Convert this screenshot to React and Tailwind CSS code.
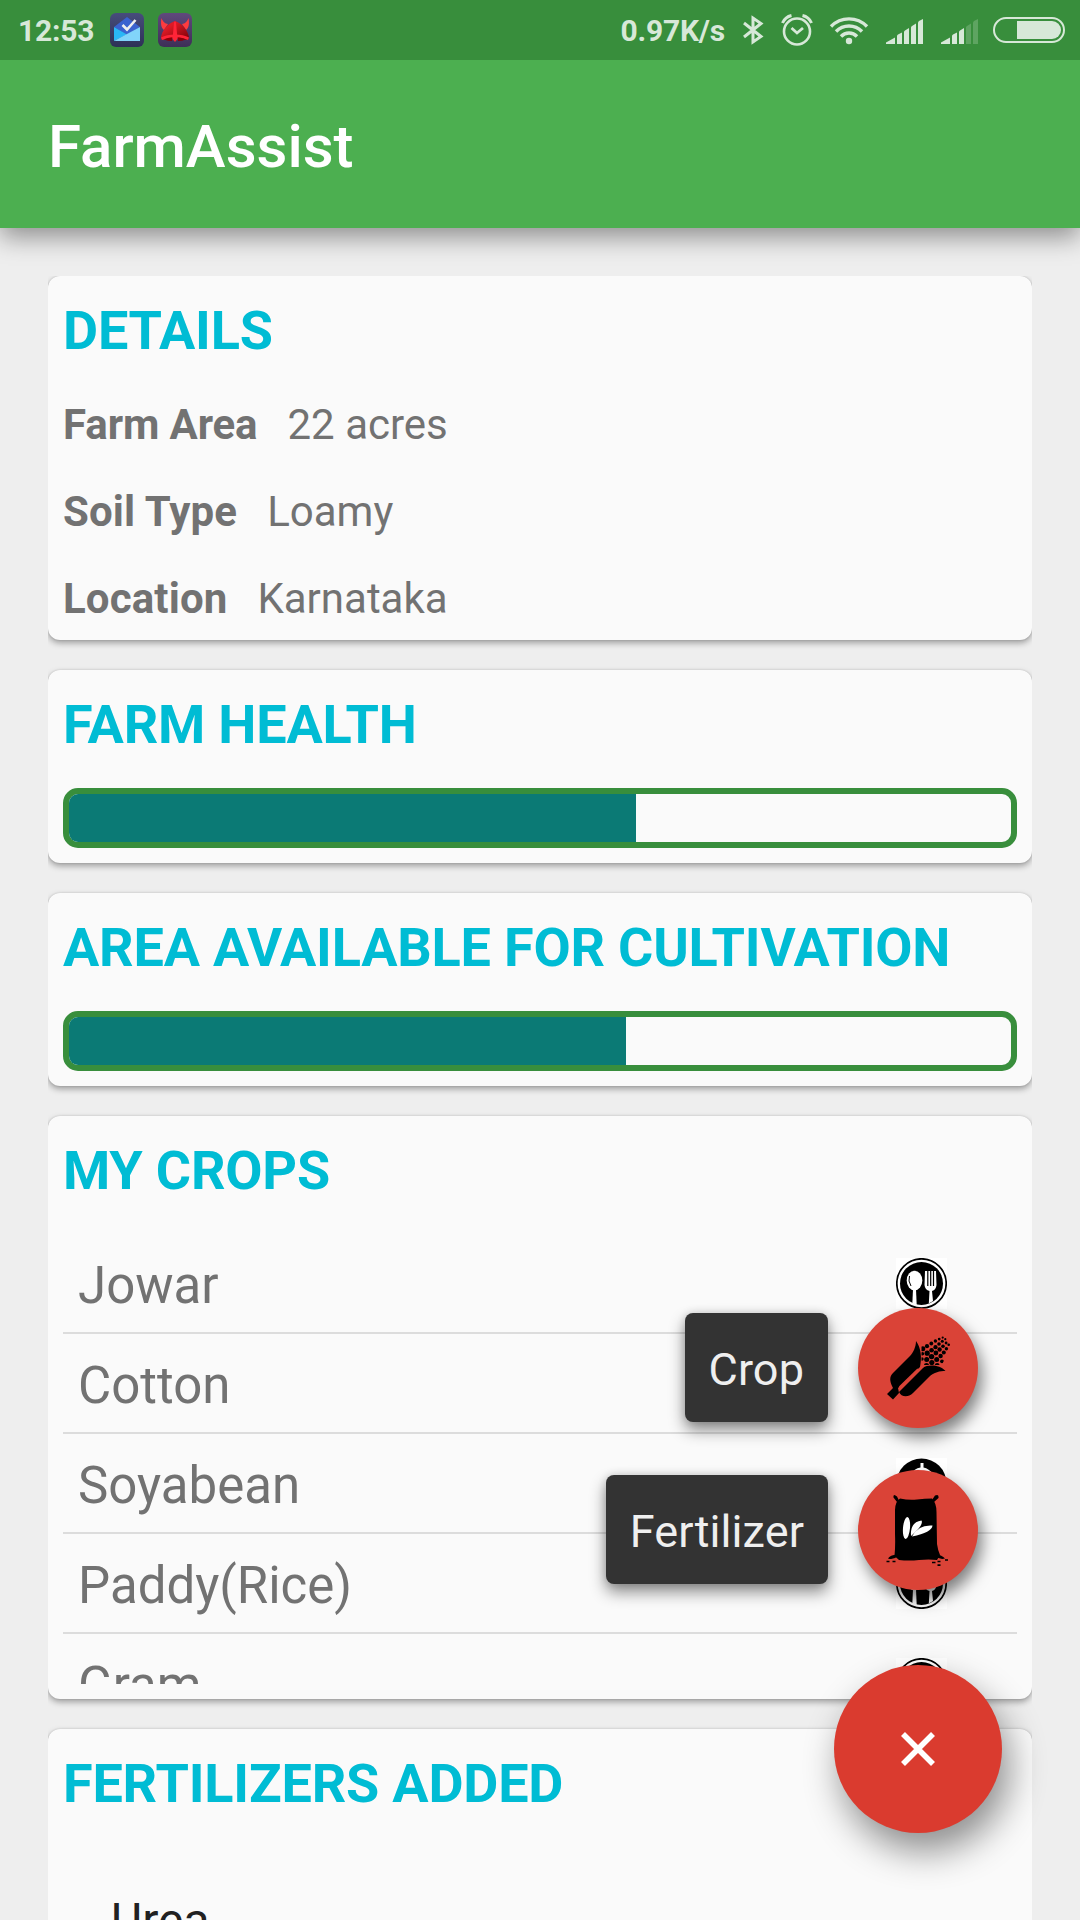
const crops = [
  { name: "Jowar", icon: "cutlery" },
  { name: "Cotton", icon: null },
  { name: "Soyabean", icon: "cloche" },
  { name: "Paddy(Rice)", icon: "cutlery" },
  { name: "Gram", icon: "cutlery" },
];

const details = [
  ["Farm Area", "22 acres", "tracking-[-0.1px]"],
  ["Soil Type", "Loamy", "tracking-[0.13px]"],
  ["Location", "Karnataka", "tracking-[0.13px]"],
];

// Corn kernels as [x, y, radius], row by row from the husk to the tip.
const kernels = [
  [40.8, 16.7, 2.5], [45, 14.2, 2.1], [49.3, 11.5, 1.9], [53.4, 9, 1.7], [57.2, 7.1, 1.4], [60.7, 5.6, 1.1],
  [40.4, 21.8, 1.8], [45.2, 21.2, 2.6], [49.6, 18.2, 2.3], [53.5, 15.2, 2.1], [57, 12, 1.8], [60.3, 9.3, 1.5], [63.3, 7.2, 1.1],
  [40, 27, 1.7], [44.7, 27.6, 2.5], [49.6, 24.6, 2.7], [53.9, 21, 2.4], [57.6, 17.5, 2.2], [61, 14.2, 1.8], [64.1, 11, 1.4],
  [44.5, 33.5, 2.6], [49.8, 30.6, 2.6], [54.7, 27.5, 2.5], [58.6, 24, 2.2], [61.8, 20.4, 2], [64.4, 16.8, 1.7], [66.7, 12.8, 1.3],
  [55.2, 33.4, 2.4], [60, 29.3, 1.9],
];

function InboxIcon() {
  return (
    <svg className="h-[34px] w-[34px]" viewBox="0 0 34 34">
      <defs>
        <linearGradient id="inbox-bg" x1="0" y1="0" x2="0" y2="1">
          <stop offset="0" stopColor="#474c7c" />
          <stop offset="1" stopColor="#2d3156" />
        </linearGradient>
      </defs>
      <rect width="34" height="34" rx="6" fill="url(#inbox-bg)" />
      <path d="M4 14 L17 4 L30 14 L17 22 Z" fill="#3a62cf" />
      <path d="M4 14 L17 21.500 L4 28 Z" fill="#29b6f6" />
      <path d="M30 14 V28 H4 Z" fill="#81d4fa" />
      <path d="M12.500 12 L17 16.500 L25.500 7" fill="none" stroke="#eee" strokeWidth="2.600" />
    </svg>
  );
}

function HelmetIcon() {
  return (
    <svg className="h-[34px] w-[34px]" viewBox="0 0 34 34">
      <defs>
        <linearGradient id="helmet-bg" x1="0" y1="0" x2="0" y2="1">
          <stop offset="0" stopColor="#60497d" />
          <stop offset="1" stopColor="#3d2f57" />
        </linearGradient>
        <linearGradient id="helmet-dome" x1="0" y1="0" x2="1" y2="1">
          <stop offset="0.300" stopColor="#dd1a25" />
          <stop offset="1" stopColor="#7a0008" />
        </linearGradient>
      </defs>
      <rect width="34" height="34" rx="6" fill="url(#helmet-bg)" />
      <path d="M3.500 5 C5 9 7 10.500 10 11 L6 17 C3 15 2.500 10 3.500 5 Z" fill="#ff3b3f" />
      <path d="M30.500 5 C29 9 27 10.500 24 11 L28 17 C31 15 31.500 10 30.500 5 Z" fill="#ff3b3f" />
      <path d="M3 24 C4.500 17 9 11 17 8 C25 11 29.500 17 31 24 L30 27 L20 25.500 H14 L4 27 Z" fill="url(#helmet-dome)" />
      <path d="M3 24.500 C10 20.500 24 20.500 31 24.500 L30 27 Q24 24 20 24.500 H14 Q10 24 4 27 Z" fill="#ff2437" />
      <path d="M6 26.500 Q10 24.500 14 24.500 V28 Q10 28 6 26.500 Z M28 26.500 Q24 24.500 20 24.500 V28 Q24 28 28 26.500 Z" fill="#8a000a" />
      <path d="M16 9.500 L17 8 L18 9.500 L19.500 26 L17 29 L14.500 26 Z" fill="#ff2437" />
    </svg>
  );
}

function BluetoothIcon() {
  return (
    <svg className="ml-[17px] h-[30px] w-[22px]" viewBox="0 0 22 30">
      <path
        d="M2 8 L19 21.500 L11 27 V3 L19 8.500 L2 22"
        fill="none"
        stroke="#d7e8d8"
        strokeWidth="3"
      />
    </svg>
  );
}

function AlarmIcon() {
  return (
    <svg className="ml-[17px] h-8 w-8" viewBox="0 0 32 32" fill="none" stroke="#d7e8d8">
      <circle cx="16" cy="17.500" r="13" strokeWidth="2.600" />
      <path d="M10.500 14 L16 19 L22 14" strokeWidth="2.800" />
      <path d="M1.500 9 C3 5.500 6 2.500 10.500 1.500 M30.500 9 C29 5.500 26 2.500 21.500 1.500" strokeWidth="3" />
    </svg>
  );
}

function WifiIcon() {
  return (
    <svg className="ml-[15px] h-[30px] w-[42px]" viewBox="0 0 42 30" fill="none" stroke="#d7e8d8" strokeWidth="3.400">
      <path d="M3 11.500 A25 25 0 0 1 39 11.500" />
      <path d="M8 16.500 A18 18 0 0 1 34 16.500" />
      <path d="M13 21.500 A11 11 0 0 1 29 21.500" />
      <circle cx="21" cy="26" r="3.200" fill="#d7e8d8" stroke="none" />
    </svg>
  );
}

function SignalIcon({ bars, className }) {
  const shapes = [
    "M0 25 V23.500 L9 18.500 V25 Z",
    "M11 25 V17 Q11 16 12 15.500 L16 13.500 V25 Z",
    "M18 25 V13 Q18 12 19 11.500 L23 9 V25 Z",
    "M25 25 V8.500 Q25 7.500 26 7 L30 4.500 V25 Z",
    "M32 25 V4 Q32 3 33 2 L37 0 V25 Z",
  ];
  return (
    <svg className={`mt-0.5 h-[25px] w-[37px] ${className}`} viewBox="0 0 37 25">
      {shapes.map((d, i) => (
        <path key={d} d={d} fill={i < bars ? "#d7e8d8" : "#5ea461"} />
      ))}
    </svg>
  );
}

function BatteryIcon() {
  return (
    <svg className="ml-[15px] h-[26px] w-[72px]" viewBox="0 0 72 26">
      <rect x="1" y="1" width="70" height="24" rx="12" fill="none" stroke="#d7e8d8" strokeWidth="2" />
      <path d="M24 4 H59 A9 9 0 0 1 59 22 H24 Z" fill="#d7e8d8" />
    </svg>
  );
}

function CutleryIcon() {
  return (
    <svg className="h-[51px] w-[51px] bg-white" viewBox="0 0 51 51">
      <circle cx="25.500" cy="25.500" r="24.700" fill="#fff" stroke="#000" strokeWidth="1.700" />
      <circle cx="25.500" cy="25.500" r="21.500" fill="#000" />
      <ellipse cx="18.500" cy="22.500" rx="7.800" ry="9.800" fill="#fff" />
      <path d="M13.500 18 Q11.800 23 15 28" fill="none" stroke="#000" strokeWidth="1" />
      <path d="M17 31 H20 L20.700 47 L16.300 46 Z" fill="#fff" />
      <path d="M29 13 H40 L40.500 27 Q40 32 36 33 L37 43 L32.800 45.500 L33.500 33 Q29 32 28.500 27 Z" fill="#fff" />
      <path d="M31.800 13 V28 M34.700 13 V28 M37.500 13 V28" stroke="#000" strokeWidth="1.200" />
    </svg>
  );
}

function ClocheIcon() {
  return (
    <svg className="h-[51px] w-[51px] bg-white" viewBox="0 0 51 51">
      <circle cx="25.500" cy="25.500" r="25" fill="#000" />
      <path d="M24.500 5 H27.500 V9.500 Q33 10.500 37 16 H15 Q18 10.500 24.500 9.500 Z" fill="#fff" />
    </svg>
  );
}

function CornIcon() {
  return (
    <svg className="h-[72px] w-[72px]" viewBox="0 0 72 72">
      <defs>
        <clipPath id="cob">
          <path d="M39.500 12 L62 3 L70 10 L60 33 H39.500 Z" />
        </clipPath>
      </defs>
      <g clipPath="url(#cob)">
        {kernels.map(([x, y, r]) => (
          <circle key={`${x}-${y}`} cx={x} cy={y} r={r} />
        ))}
      </g>
      <path d="M34 9 C34 15 31 21 28 24 L11 41 C7 45 8 49 10 54 L11 56 L5 62 L11 67.500 L17 61 L16 56 L38 35 C40 25 39 16 34 9 Z" />
      <path d="M63.500 39 C58 33 46 32 41 36 L17 60 C19 65 26 66 31 61 L47 45 C52 40 58 39 63.500 39 Z" />
      <path d="M17.500 55 L36 37" stroke="#da4337" strokeWidth="1.700" />
    </svg>
  );
}

function SackIcon() {
  return (
    <svg className="ml-0.5 h-[72px] w-[72px]" viewBox="0 0 72 72">
      <path d="M17 4.500 Q26 6.500 34 5.500 T49 4.500 Q53.500 9 53.500 18 L54 50 Q55 57 57 61 L54 66 Q46 65 36 66 T16 66 L11.500 62 Q12.500 52 12 40 L12 16 Q12 8 17 4.500 Z" />
      <path d="M16 6.500 L14 2.500 Q10 -1 10.500 3.500 L14 8 Z M49 6 L52 1.500 Q56 -0.500 55.500 4 L51 8 Z" />
      <path d="M14 60.500 Q7 61 5 64.500 Q10 66.500 15 62 Z M53 60 Q59 61 62 64.500 Q57 66 52 62 Z" />
      <ellipse cx="23.500" cy="34" rx="3.500" ry="11" fill="#fff" transform="rotate(5 23.500 34)" />
      <path d="M28 42 Q27 28 38.500 26.500 Q41 31 28 42 Z" fill="#fff" />
      <path d="M29 42.500 Q35 30.500 49.500 31.500 Q49 38.500 29 42.500 Z" fill="#fff" />
      <path d="M3.500 67.500 h3 M9.500 67.500 h3 M49 68.500 h3.500 M54.500 67.500 h3 M62 66 h3 M54.500 71.200 h3" stroke="#000" strokeWidth="1.700" />
    </svg>
  );
}

function Card({ title, children, className = "" }) {
  return (
    <section
      className={`shrink-0 rounded-xl bg-[#fafafa] px-[15px] pb-[15px] pt-[23px] shadow-[0_3px_6px_rgba(0,0,0,0.34),0_0_2px_rgba(0,0,0,0.16)] ${className}`}
    >
      <h2 className="h-16 whitespace-nowrap text-[54px] font-bold leading-[64px] tracking-[-0.2px] text-[#00bcd4]">
        {title}
      </h2>
      {children}
    </section>
  );
}

function Meter({ value }) {
  return (
    <div className="mt-[31px] h-[60px] overflow-hidden rounded-[15px] border-[6px] border-[#388e3c]">
      <div className="h-full bg-[#0b7a75]" style={{ width: value }} />
    </div>
  );
}

function Action({ label, children }) {
  return (
    <div className="flex items-start justify-end gap-[30px] pr-6">
      <span className="mt-[5px] flex h-[109px] items-center rounded-lg bg-[#333] px-6 pt-[3px] text-[45px] leading-[53px] tracking-[0.1px] text-[#efefef] shadow-[0_8px_16px_rgba(0,0,0,0.45),0_0_8px_rgba(0,0,0,0.14)]">
        {label}
      </span>
      <span className="flex h-[120px] w-[120px] items-center justify-center rounded-full bg-[#da4337] shadow-[4px_9px_16px_rgba(0,0,0,0.5)]">
        {children}
      </span>
    </div>
  );
}

export default function App() {
  return (
    <div className="relative flex h-[1920px] w-[1080px] flex-col overflow-hidden bg-[#eee] font-['Roboto',sans-serif] text-[#727272]">
      <div className="z-20 flex h-[60px] shrink-0 items-center bg-[#388e3c] pl-[18px] pr-[15px] text-[30px] font-bold leading-[36px] tracking-[-0.2px] text-[#d7e8d8]">
        <span className="w-[92px] pt-0.5">12:53</span>
        <InboxIcon />
        <span className="w-[14px]" />
        <HelmetIcon />
        <span className="ml-auto pt-0.5">0.97K/s</span>
        <BluetoothIcon />
        <AlarmIcon />
        <WifiIcon />
        <SignalIcon bars={5} className="ml-4" />
        <SignalIcon bars={3} className="ml-[18px]" />
        <BatteryIcon />
      </div>
      <header className="z-10 flex h-[168px] shrink-0 items-center bg-[#4caf50] px-12 shadow-[0_9px_24px_rgba(0,0,0,0.4)]">
        <h1 className="pt-1.5 text-[60px] font-medium leading-[70px] text-white">FarmAssist</h1>
      </header>

      <main className="mx-12 mt-12 flex min-h-0 flex-1 flex-col gap-[30px] overflow-hidden">
        <Card title="DETAILS" className="h-[364px]">
          <dl className="mt-[37px] text-[42px] leading-[50px]">
            {details.map(([key, value, tracking]) => (
              <div key={key} className="mb-[37px] flex gap-[30px]">
                <dt className={`font-bold ${tracking}`}>{key}</dt>
                <dd>{value}</dd>
              </div>
            ))}
          </dl>
        </Card>

        <Card title="FARM HEALTH">
          <Meter value="567px" />
        </Card>

        <Card title="AREA AVAILABLE FOR CULTIVATION">
          <Meter value="557px" />
        </Card>

        <Card title="MY CROPS" className="flex h-[583px] flex-col">
          <ul className="mt-[31px] min-h-0 flex-1 overflow-hidden text-[51px] leading-[60px]">
            {crops.map((crop) => (
              <li
                key={crop.name}
                className="flex h-[100px] items-start justify-between border-b-2 border-[#dcdcdc] pl-[15px] pr-[70px] pt-[22px]"
              >
                <span>{crop.name}</span>
                <span className="mt-[1.5px]">
                  {crop.icon === "cloche" && <ClocheIcon />}
                  {crop.icon === "cutlery" && <CutleryIcon />}
                </span>
              </li>
            ))}
          </ul>
        </Card>

        <Card title="FERTILIZERS ADDED" className="h-[400px]">
          <p className="mt-[77px] pl-12 text-[48px] leading-[56px] text-[#212121]">Urea</p>
        </Card>
      </main>

      <div className="absolute right-[78px] top-[1308px] z-20 flex flex-col items-end">
        <div className="flex flex-col gap-[42px]">
          <Action label="Crop">
            <CornIcon />
          </Action>
          <Action label="Fertilizer">
            <SackIcon />
          </Action>
        </div>
        <button className="mt-[75px] flex h-[168px] w-[168px] items-center justify-center rounded-full bg-[#da3b2f] shadow-[7px_18px_36px_rgba(0,0,0,0.44)]">
          <svg className="h-[34px] w-[34px]" viewBox="0 0 34 34">
            <path d="M2 2 L32 32 M32 2 L2 32" stroke="#fff" strokeWidth="5.600" />
          </svg>
        </button>
      </div>
    </div>
  );
}
